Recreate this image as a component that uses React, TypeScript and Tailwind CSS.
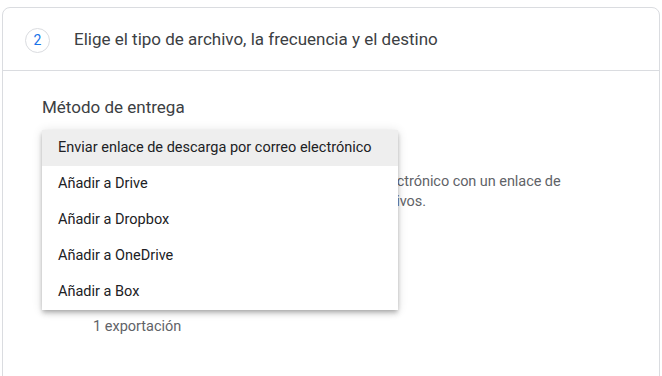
const options = [
  "Enviar enlace de descarga por correo electrónico",
  "Añadir a Drive",
  "Añadir a Dropbox",
  "Añadir a OneDrive",
  "Añadir a Box",
];

const App = () => {
  return (
    <div className="h-[376px] w-[662px] overflow-hidden bg-white font-['Roboto',sans-serif]">
      <div className="mx-[2px] mt-[7px] h-[400px] rounded-t-lg border border-[#dadce0]">
        {/* STEP HEADER */}
        <div className="flex h-[63px] items-center border-b border-[#dadce0] pl-[22px] pt-[2px]">
          <div className="flex h-[25px] w-[25px] items-center justify-center rounded-full border border-[#dadce0] text-[14px] text-[#1a73e8]">
            2
          </div>
          <span className="ml-[24px] text-[17px] text-[#3c4043]">
            Elige el tipo de archivo, la frecuencia y el destino
          </span>
        </div>

        {/* BODY */}
        <div className="relative pl-[39px] pt-[26px]">
          <div className="text-[17px] leading-5 text-[#3c4043]">Método de entrega</div>

          {/* select field, covered by the open menu */}
          <div className="mt-[13px] flex h-[36px] w-[356px] items-center px-4 text-[14.5px] text-[#202124]">
            Enviar enlace de descarga por correo electrónico
          </div>

          <p className="mt-[6px] whitespace-nowrap text-[14.5px] leading-5 tracking-[-0.06px] text-[#5f6368]">
            Cuando tus archivos estén listos, recibirás un correo electrónico con un enlace de
            <br />
            descarga. Tendrás una semana para descargar tus archivos.
          </p>

          <div className="ml-[51px] mt-[105px] text-[14.5px] leading-5 text-[#5f6368]">1 exportación</div>

          {/* DROPDOWN MENU */}
          <div className="absolute left-[39px] top-[59px] w-[356px] bg-white shadow-[0_2px_4px_-1px_rgba(0,0,0,0.2),0_4px_5px_0_rgba(0,0,0,0.14),0_1px_10px_0_rgba(0,0,0,0.12)]">
            {options.map((opt, i) => (
              <div
                key={opt}
                className={`flex h-[36px] items-center px-4 text-[14.5px] text-[#202124] ${i === 0 ? "bg-[#eeeeee]" : ""}`}
              >
                {opt}
              </div>
            ))}
          </div>
        </div>
      </div>
    </div>
  );
};

export default App;
